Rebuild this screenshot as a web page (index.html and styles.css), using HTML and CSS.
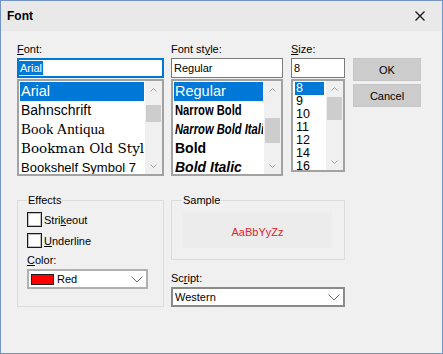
FILE: index.html
```html
<!DOCTYPE html>
<html>
<head>
<meta charset="utf-8">
<title>Font</title>
<link rel="stylesheet" href="styles.css">
</head>
<body>
<div class="window">
  <div class="titlebar">
    <span class="title">Font</span>
    <svg class="close" width="10" height="10" viewBox="0 0 10 10"><path d="M0.5 0.5 L9.5 9.5 M9.5 0.5 L0.5 9.5" stroke="#111" stroke-width="1.2" fill="none"/></svg>
  </div>
  <div class="content">
    <div class="top">
      <div class="col col-font">
        <div class="label"><u>F</u>ont:</div>
        <div class="input focused"><span class="sel">Arial</span></div>
        <div class="listbox">
          <div class="items">
            <div class="item selected f-arial">Arial</div>
            <div class="item f-bahn">Bahnschrift</div>
            <div class="item f-antiqua">Book Antiqua</div>
            <div class="item f-bookman">Bookman Old Style</div>
            <div class="item f-bookshelf">Bookshelf Symbol 7</div>
          </div>
          <div class="scrollbar">
            <div class="sb-btn"><svg width="7" height="4" viewBox="0 0 7 4"><polyline points="0.5,3.5 3.5,0.5 6.5,3.5" stroke="#a6a6a6" fill="none"/></svg></div>
            <div class="sb-track"><div class="thumb thumb-font"></div></div>
            <div class="sb-btn"><svg width="7" height="4" viewBox="0 0 7 4"><polyline points="0.5,0.5 3.5,3.5 6.5,0.5" stroke="#a6a6a6" fill="none"/></svg></div>
          </div>
        </div>
      </div>
      <div class="col col-style">
        <div class="label">Font st<u>y</u>le:</div>
        <div class="input">Regular</div>
        <div class="listbox">
          <div class="items">
            <div class="item selected s-regular">Regular</div>
            <div class="item s-narrow"><span class="narrow">Narrow Bold</span></div>
            <div class="item s-narrow s-italic"><span class="narrow">Narrow Bold Italic</span></div>
            <div class="item s-bold">Bold</div>
            <div class="item s-bold s-italic">Bold Italic</div>
          </div>
          <div class="scrollbar">
            <div class="sb-btn"><svg width="7" height="4" viewBox="0 0 7 4"><polyline points="0.5,3.5 3.5,0.5 6.5,3.5" stroke="#a6a6a6" fill="none"/></svg></div>
            <div class="sb-track"><div class="thumb thumb-style"></div></div>
            <div class="sb-btn"><svg width="7" height="4" viewBox="0 0 7 4"><polyline points="0.5,0.5 3.5,3.5 6.5,0.5" stroke="#a6a6a6" fill="none"/></svg></div>
          </div>
        </div>
      </div>
      <div class="col col-size">
        <div class="label"><u>S</u>ize:</div>
        <div class="input">8</div>
        <div class="listbox listbox-size">
          <div class="items items-size">
            <div class="item size-item selected">8</div>
            <div class="item size-item">9</div>
            <div class="item size-item">10</div>
            <div class="item size-item">11</div>
            <div class="item size-item">12</div>
            <div class="item size-item">14</div>
            <div class="item size-item">16</div>
          </div>
          <div class="scrollbar">
            <div class="sb-btn sb-btn-small"><svg width="7" height="4" viewBox="0 0 7 4"><polyline points="0.5,3.5 3.5,0.5 6.5,3.5" stroke="#a6a6a6" fill="none"/></svg></div>
            <div class="sb-track"><div class="thumb thumb-size"></div></div>
            <div class="sb-btn"><svg width="7" height="4" viewBox="0 0 7 4"><polyline points="0.5,0.5 3.5,3.5 6.5,0.5" stroke="#a6a6a6" fill="none"/></svg></div>
          </div>
        </div>
      </div>
      <div class="col col-buttons">
        <div class="label">&nbsp;</div>
        <div class="btn">OK</div>
        <div class="btn">Cancel</div>
      </div>
    </div>
    <div class="bottom">
      <fieldset class="group effects">
        <legend>Effects</legend>
        <div class="check"><span class="box"></span><span>Stri<u>k</u>eout</span></div>
        <div class="check"><span class="box"></span><span><u>U</u>nderline</span></div>
        <div class="label color-label"><u>C</u>olor:</div>
        <div class="combo color-combo">
          <span class="swatch"></span><span class="combo-text">Red</span>
          <svg class="chev" width="12" height="7" viewBox="0 0 12 7"><polyline points="0.5,0.5 6,6 11.5,0.5" stroke="#6a6a6a" fill="none"/></svg>
        </div>
      </fieldset>
      <div class="right">
        <fieldset class="group sample">
          <legend>Sample</legend>
          <div class="sample-box">AaBbYyZz</div>
        </fieldset>
        <div class="label script-label">Sc<u>r</u>ipt:</div>
        <div class="combo script-combo">
          <span class="combo-text">Western</span>
          <svg class="chev" width="12" height="7" viewBox="0 0 12 7"><polyline points="0.5,0.5 6,6 11.5,0.5" stroke="#6a6a6a" fill="none"/></svg>
        </div>
      </div>
    </div>
  </div>
</div>
</body>
</html>
```
FILE: styles.css
```css
* { box-sizing: border-box; }
html, body { margin: 0; padding: 0; }
body {
  width: 443px;
  height: 354px;
  background: #f0f0f0;
  font-family: "Liberation Sans", Arial, sans-serif;
  font-size: 11px;
  color: #000;
}
u { text-decoration: underline; text-underline-offset: 1px; }

.window {
  width: 443px;
  height: 354px;
  border: 1px solid #7393c5;
  background: #f0f0f0;
  display: flex;
  flex-direction: column;
}
.titlebar {
  flex: none;
  height: 30px;
  background: #e9e9e9;
  display: flex;
  align-items: center;
  justify-content: space-between;
  padding: 0 17px 0 6px;
}
.title { font-weight: bold; font-size: 12px; }
.close { display: block; }

.content { padding: 11px 0 0 16px; }

.label { height: 14px; line-height: 14px; white-space: nowrap; }

.top { display: flex; }
.col { display: flex; flex-direction: column; }
.col-font { width: 147px; margin-right: 7px; }
.col-style { width: 112px; margin-right: 8px; }
.col-size { width: 54px; margin-right: 8px; }
.col-buttons { width: 68px; }

.input {
  margin-top: 2px;
  height: 20px;
  border: 1px solid #7a7a7a;
  background: #fff;
  padding: 0 2px;
  display: flex;
  align-items: center;
  white-space: nowrap;
}
.input.focused { border: 2px solid #0078d7; padding: 0; }
.sel { background: #0078d7; color: #fff; line-height: 14px; padding: 0 1px; }

.listbox {
  margin-top: 1px;
  height: 97px;
  border: 2px solid #a2a2a2;
  background: #fff;
  display: flex;
}
.listbox-size { height: 93px; }
.items {
  flex: 1;
  min-width: 0;
  overflow: hidden;
  padding: 1px 1px 0 1px;
}
.items-size { padding: 1px 2px 0 2px; }
.item {
  height: 19px;
  line-height: 19px;
  padding-left: 1px;
  white-space: nowrap;
  overflow: hidden;
  font-size: 14px;
}
.item.selected { background: #0078d7; color: #fff; }

.f-arial { font-family: "Liberation Sans", Arial, sans-serif; font-size: 14.5px; }
.f-bahn { font-family: "Liberation Sans", Arial, sans-serif; font-size: 14px; }
.f-antiqua { font-family: "Liberation Serif", serif; font-size: 15px; }
.f-bookman { font-family: "DejaVu Serif", serif; font-size: 13.5px; }
.f-bookshelf { font-family: "Liberation Sans", Arial, sans-serif; font-size: 13px; }

.s-regular { font-size: 14.5px; }
.s-narrow { font-weight: bold; font-size: 14px; }
.narrow { display: inline-block; transform: scaleX(0.8); transform-origin: 0 50%; }
.s-italic { font-style: italic; }
.s-bold { font-weight: bold; font-size: 14px; }

.size-item { height: 13px; line-height: 13px; font-size: 12.5px; }

.scrollbar {
  flex: none;
  width: 17px;
  background: #f0f0f0;
  display: flex;
  flex-direction: column;
}
.sb-btn {
  flex: none;
  height: 17px;
  display: flex;
  align-items: center;
  justify-content: center;
}
.sb-btn-small { height: 16px; }
.sb-btn svg { display: block; }
.sb-track { flex: 1; }
.thumb { margin: 0 1px; background: #cdcdcd; }
.thumb-font { margin-top: 7px; height: 17px; }
.thumb-style { margin-top: 20px; height: 25px; }
.thumb-size { margin-top: 0; height: 23px; }

.btn {
  height: 23px;
  margin-top: 2px;
  background: #cccccc;
  border: 1px solid #c6c6c6;
  display: flex;
  align-items: center;
  justify-content: center;
}
.btn + .btn { margin-top: 3px; }

.bottom {
  display: flex;
  margin-top: 17px;
}
.group {
  margin: 0;
  border: 1px solid #dcdcdc;
  min-width: 0;
}
.group legend {
  padding: 0 1px;
  line-height: 14px;
  height: 14px;
}
.effects {
  width: 147px;
  margin-right: 7px;
  padding: 5px 0 0 9px;
}
.right { width: 174px; display: flex; flex-direction: column; }
.sample {
  padding: 5px 12px 11px 11px;
}
.sample legend { margin-left: -1px; }
.sample-box {
  height: 36px;
  background: #ececec;
  color: #e3222a;
  display: flex;
  align-items: center;
  justify-content: center;
  padding-top: 3px;
}

.check {
  display: flex;
  align-items: center;
  height: 15px;
  margin-bottom: 6px;
}
.box {
  width: 15px;
  height: 15px;
  border: 1px solid #1a1a1a;
  box-shadow: inset 0 0 0 1px rgba(0,0,0,0.25);
  background: #fff;
  margin-right: 2px;
  flex: none;
}
.color-label { margin-top: -1px; }

.combo {
  margin-top: 2px;
  height: 20px;
  background: #fff;
  display: flex;
  align-items: center;
  padding: 0 3px 0 2px;
}
.combo-text { flex: 1; white-space: nowrap; }
.chev { display: block; flex: none; }
.color-combo { width: 121px; border: 2px solid #b0b0b0; }
.swatch {
  width: 23px;
  height: 11px;
  background: #ff0000;
  border: 1px solid #202020;
  margin-right: 3px;
  flex: none;
}
.script-label { margin-top: 11px; }
.script-combo { border: 2px solid #8a8a8a; }
```
